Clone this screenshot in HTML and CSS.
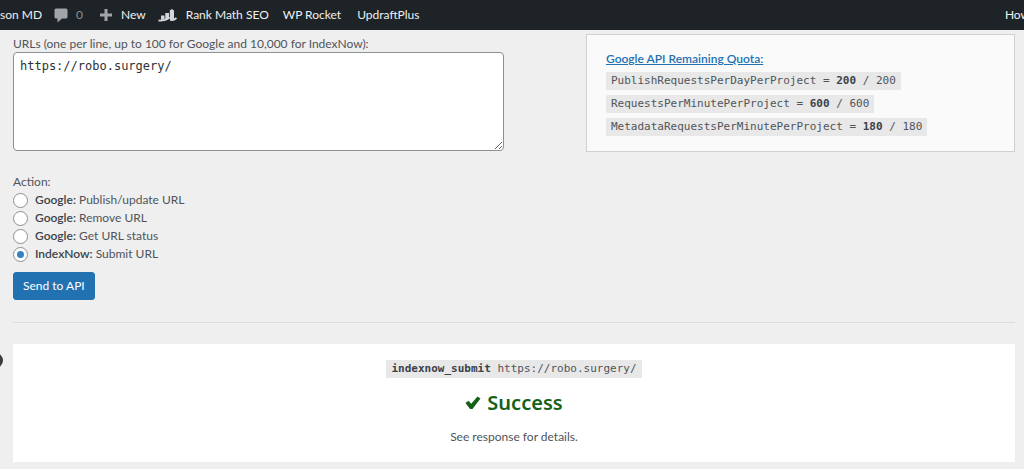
FILE: index.html
```html
<!DOCTYPE html>
<html lang="en">
<head>
<meta charset="utf-8">
<title>Instant Indexing</title>
<link rel="stylesheet" href="styles.css">
</head>
<body>
<nav class="adminbar" aria-label="Toolbar">
  <a class="bar-item site" href="#">son MD</a>
  <a class="bar-item comments" href="#">
    <svg class="icon" width="14" height="15" viewBox="0 0 14 15" aria-hidden="true"><path fill="#a0a5aa" d="M2 0.500h10q1.500 0 1.500 1.500v7q0 1.500-1.500 1.500H8L3.500 14.500V10.500H2Q.5 10.500.5 9V2Q.5.5 2 .5z"/></svg>
    <span>0</span>
  </a>
  <a class="bar-item new" href="#">
    <svg class="icon" width="14" height="14" viewBox="0 0 14 14" aria-hidden="true"><path fill="#a0a5aa" d="M5.500 1h3v4.500H13v3H8.500V13h-3V8.500H1v-3h4.500z"/></svg>
    <span>New</span>
  </a>
  <a class="bar-item rank" href="#">
    <svg class="icon" width="19" height="14" viewBox="0 0 19 14" aria-hidden="true"><path fill="#d5d8da" d="M3 7.500h3.500v3.500L3 12zM7.300 5H11v5l-3.700 1.500zM11.800 2.500l2-1.500L16 2.500v8.500h-4.200z"/><path fill="none" stroke="#d5d8da" stroke-width="1.800" d="M.5 12.500C5 12.800 8 12.300 11.500 9.500M12.500 9.500l.5 2.500q3 .5 5.500-2"/></svg>
    <span>Rank Math SEO</span>
  </a>
  <a class="bar-item rocket" href="#">WP Rocket</a>
  <a class="bar-item" href="#">UpdraftPlus</a>
  <a class="bar-item account" href="#">How</a>
</nav>
<main class="page">
  <div class="columns">
    <form class="console">
      <label class="field-label" for="urls">URLs (one per line, up to 100 for Google and 10,000 for IndexNow):</label>
      <textarea class="urls" id="urls" spellcheck="false">https://robo.surgery/</textarea>
      <fieldset class="actions">
        <legend>Action:</legend>
        <label class="choice"><input type="radio" name="action"><span><strong>Google:</strong> Publish/update URL</span></label>
        <label class="choice"><input type="radio" name="action"><span><strong>Google:</strong> Remove URL</span></label>
        <label class="choice"><input type="radio" name="action"><span><strong>Google:</strong> Get URL status</span></label>
        <label class="choice"><input type="radio" name="action" checked><span><strong>IndexNow:</strong> Submit URL</span></label>
      </fieldset>
      <button class="send" type="button">Send to API</button>
    </form>
    <aside class="quota">
      <a class="quota-title" href="#">Google API Remaining Quota:</a>
      <code>PublishRequestsPerDayPerProject = <strong>200</strong> / 200</code>
      <code>RequestsPerMinutePerProject = <strong>600</strong> / 600</code>
      <code>MetadataRequestsPerMinutePerProject = <strong>180</strong> / 180</code>
    </aside>
  </div>
  <hr class="rule">
  <section class="response">
    <button class="collapse" type="button" aria-label="Collapse menu"></button>
    <code><strong>indexnow_submit</strong> https://robo.surgery/</code>
    <h2 class="status">
      <svg class="tick" width="16" height="14" viewBox="0 0 16 14" aria-hidden="true"><path fill="#14611a" d="M.5 7 3.500 4.800l2.700 3L12.500.5 15.500 2.500 7.500 13H5z"/></svg>
      <span>Success</span>
    </h2>
    <p class="details">See response for details.</p>
  </section>
</main>
</body>
</html>
```
FILE: styles.css
```css
* { box-sizing: border-box; }

body {
  margin: 0;
  background: #efefef;
  color: #50545a;
  font: 12px/18px Lato, "Open Sans", sans-serif;
  overflow-x: hidden;
}

.adminbar {
  display: flex;
  align-items: center;
  height: 30px;
  background: #1d2327;
  overflow: hidden;
}
.bar-item {
  display: flex;
  align-items: center;
  flex: none;
  color: #f0f0f1;
  text-decoration: none;
  margin-right: 16px;
}
.bar-item.site { margin-right: 12px; }
.bar-item.comments { color: #8c9196; gap: 8px; }
.bar-item.new { gap: 8px; margin-right: 12px; }
.bar-item.rank { gap: 9px; margin-right: 14px; }
.bar-item.account { margin: 0 -6px 0 auto; }
.icon { display: block; }

.page { padding: 4px 9px 7px 13px; }

.columns {
  display: grid;
  grid-template-columns: minmax(0, 491fr) minmax(0, 429fr);
  column-gap: 82px;
  align-items: start;
}
.console {
  display: flex;
  flex-direction: column;
  align-items: flex-start;
}
.field-label { padding-top: 1px; line-height: 17px; }
.urls {
  width: 100%;
  height: 99px;
  padding: 4px 6px;
  border: 1px solid #8c8f94;
  border-radius: 4px;
  background: #fff;
  color: #2c3338;
  font: 12px/18px "DejaVu Sans Mono", monospace;
}
.actions {
  margin: 22px 0 0;
  padding: 0;
  border: 0;
}
.actions legend { padding: 0; }
.choice {
  display: flex;
  align-items: center;
  gap: 7px;
  height: 18px;
}
strong { font-weight: 600; color: #3c4248; }
.choice input {
  appearance: none;
  display: grid;
  place-items: center;
  width: 15px;
  height: 15px;
  margin: 0;
  border: 1px solid #8c8f94;
  border-radius: 50%;
  background: #fff;
}
.choice input:checked::before {
  content: "";
  width: 7px;
  height: 7px;
  border-radius: 50%;
  background: #3582c4;
}
.send {
  margin-top: 9px;
  padding: 4px 9px;
  border: 1px solid #2271b1;
  border-radius: 3px;
  background: #2271b1;
  color: #fff;
  font: inherit;
  line-height: 18px;
}

.quota {
  display: flex;
  flex-direction: column;
  align-items: flex-start;
  gap: 5px;
  padding: 15px 19px;
  border: 1px solid #d0d0d0;
  background: #fafafa;
}
.quota-title { color: #2271b1; font-weight: 600; line-height: 17px; }
code {
  padding: 1px 5px;
  background: #e8e8e8;
  font: 11px/16px "DejaVu Sans Mono", monospace;
}
code strong { font-weight: 700; }

.rule {
  height: 1px;
  margin: 22px 0 21px;
  border: 0;
  background: #dddddd;
}

.response {
  position: relative;
  display: flex;
  flex-direction: column;
  align-items: center;
  padding: 16px 20px 16px;
  background: #fff;
}
.collapse {
  position: absolute;
  top: 9px;
  left: -25px;
  width: 15px;
  height: 15px;
  padding: 0;
  border: 0;
  border-radius: 50%;
  background: #3c3c3c;
}
.status {
  display: flex;
  align-items: center;
  gap: 6px;
  margin: 11px 0;
  color: #14611a;
  font: 600 20px/28px "Noto Sans", sans-serif;
}
.details { margin: 0; }
```
